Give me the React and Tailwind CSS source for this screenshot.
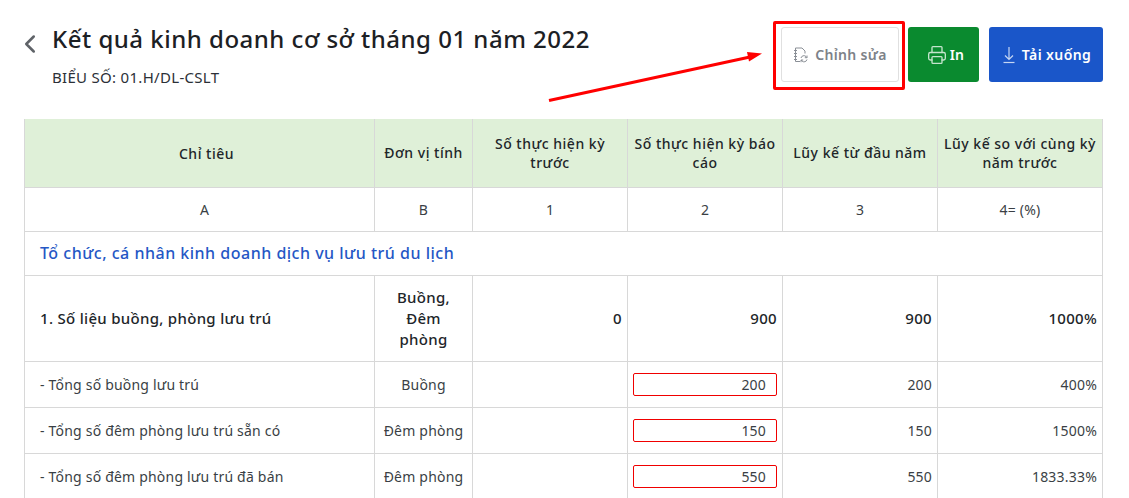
import React from "react";
import { ChevronLeft, Printer } from "lucide-react";

const rows = [
  { name: "- Tổng số buồng lưu trú", unit: "Buồng", input: "200", total: "200", pct: "400%" },
  { name: "- Tổng số đêm phòng lưu trú sẵn có", unit: "Đêm phòng", input: "150", total: "150", pct: "1500%" },
  { name: "- Tổng số đêm phòng lưu trú đã bán", unit: "Đêm phòng", input: "550", total: "550", pct: "1833.33%" },
];

const EditIcon = () => (
  <svg width="15" height="16" viewBox="0 0 15 16" fill="none" stroke="#8a8f96" strokeWidth="1" className="mr-[7px]">
    <path d="M2.5 1h6.5l3 3v2.5M2.5 1v13.5h4.5" />
    <path d="M1 3.5h3M1 6.5h3M1 9.5h3M1 12.5h3" />
    <path d="M8 11a3 3 0 0 1 5-1.5l1 1M14 12.5a3 3 0 0 1-5 1.5l-1-1" />
    <path d="M14 8.5v2.2h-2.2M8 15.2V13h2.2" />
  </svg>
);

const DownloadIcon = () => (
  <svg width="12" height="18" viewBox="0 0 12 18" fill="none" stroke="#c5d6f3" strokeWidth="1.2" className="mr-[7px]">
    <path d="M6 1v12M2 9.5l4 4 4-4" />
    <path d="M0.5 16.5h11" />
  </svg>
);

const App = () => {
  return (
    <div className="relative w-[1129px] h-[498px] overflow-hidden bg-white pl-[24px] pr-[26px] text-[#212529] font-['Noto_Sans','Open_Sans',sans-serif]">
      <div className="flex justify-between h-[119px]">
        <div className="flex items-start">
          <ChevronLeft className="w-[30px] h-[30px] mt-[29px] -ml-[9px] mr-[7px] text-[#5f6368]" strokeWidth={2} />
          <div>
            <h1 className="text-[24px] leading-[32px] mt-[23px] font-medium tracking-[0.5px] text-[#1c2024]">
              Kết quả kinh doanh cơ sở tháng 01 năm 2022
            </h1>
            <p className="text-[15px] leading-[20px] mt-[12px] tracking-[0.3px] text-[#2b3037]">BIỂU SỐ: 01.H/DL-CSLT</p>
          </div>
        </div>
        <div className="flex items-start pt-[27px]">
          <button className="flex items-center justify-center w-[118px] h-[55px] rounded-[3px] border border-[#e0e0e0] bg-white text-[14px] font-semibold tracking-[0.3px] text-[#7d8288]">
            <EditIcon />Chỉnh sửa
          </button>
          <button className="flex items-center justify-center w-[71px] h-[55px] ml-[9px] pl-[4px] rounded-[3px] bg-[#0a8a2f] text-[14px] font-semibold tracking-[0.3px] text-white">
            <Printer className="w-[20px] h-[20px] mr-[3px] text-[#c4e4cc]" strokeWidth={1.6} />In
          </button>
          <button className="flex items-center justify-center w-[114px] h-[55px] ml-[10px] pl-[2px] rounded-[3px] bg-[#1a56c9] text-[14px] font-semibold tracking-[0.4px] text-white">
            <DownloadIcon />Tải xuống
          </button>
        </div>
      </div>

      <table className="table-fixed border-collapse w-[1078px] text-[14px] leading-[19px] tracking-[0.2px]">
        <colgroup>
          <col className="w-[350px]" />
          <col className="w-[98px]" />
          <col className="w-[155px]" />
          <col className="w-[155px]" />
          <col className="w-[155px]" />
          <col className="w-[165px]" />
        </colgroup>
        <thead>
          <tr className="h-[68px] bg-[#dff0d8] tracking-[0.5px]">
            <th className="border border-[#d8d8d8] border-t-0 pl-[14px] pt-[2px] font-medium text-center">Chỉ tiêu</th>
            {["Đơn vị tính", "Số thực hiện kỳ trước", "Số thực hiện kỳ báo cáo", "Lũy kế từ đầu năm", "Lũy kế so với cùng kỳ năm trước"].map((h) => (
              <th key={h} className="border border-[#d8d8d8] border-t-0 px-[6px] font-medium text-center">{h}</th>
            ))}
          </tr>
        </thead>
        <tbody>
          <tr className="h-[44px] text-center text-[#3a3f45]">
            <td className="border border-[#d8d8d8] pl-[10px]">A</td>
            <td className="border border-[#d8d8d8]">B</td>
            <td className="border border-[#d8d8d8]">1</td>
            <td className="border border-[#d8d8d8]">2</td>
            <td className="border border-[#d8d8d8]">3</td>
            <td className="border border-[#d8d8d8]">4= (%)</td>
          </tr>
          <tr className="h-[44px]">
            <td colSpan={6} className="border border-[#d8d8d8] px-[15px] text-[16px] font-medium tracking-[0.5px] text-[#2557c5]">
              Tổ chức, cá nhân kinh doanh dịch vụ lưu trú du lịch
            </td>
          </tr>
          <tr className="h-[86px] text-[15px] font-medium tracking-[0.3px]">
            <td className="border border-[#d8d8d8] px-[15px]">1. Số liệu buồng, phòng lưu trú</td>
            <td className="border border-[#d8d8d8] px-[12px] text-center leading-[21px]">Buồng, Đêm phòng</td>
            <td className="border border-[#d8d8d8] px-[5px] text-right">0</td>
            <td className="border border-[#d8d8d8] px-[5px] text-right">900</td>
            <td className="border border-[#d8d8d8] px-[5px] text-right">900</td>
            <td className="border border-[#d8d8d8] px-[5px] text-right">1000%</td>
          </tr>
          {rows.map((r) => (
            <tr key={r.name} className="h-[46px] text-[#3a3f45]">
              <td className="border border-[#d8d8d8] px-[15px]">{r.name}</td>
              <td className="border border-[#d8d8d8] text-center">{r.unit}</td>
              <td className="border border-[#d8d8d8]"></td>
              <td className="border border-[#d8d8d8] px-[5px]">
                <div className="h-[23px] rounded-[2px] border border-[#f00000] px-[10px] text-right leading-[22px]">{r.input}</div>
              </td>
              <td className="border border-[#d8d8d8] px-[5px] text-right">{r.total}</td>
              <td className="border border-[#d8d8d8] px-[5px] text-right">{r.pct}</td>
            </tr>
          ))}
        </tbody>
      </table>

      {/* annotation drawn on top of the screenshot */}
      <div className="absolute left-[773px] top-[21px] w-[132px] h-[69px] border-[3px] border-[#ff0000] rounded-[2px]"></div>
      <svg className="absolute left-0 top-0 pointer-events-none" width="1129" height="498">
        <line x1="549" y1="100.5" x2="750" y2="57" stroke="#ff0000" strokeWidth="3" />
        <polygon points="762,53.5 747,52 749,61.5" fill="#ff0000" />
      </svg>
    </div>
  );
};

export default App;
